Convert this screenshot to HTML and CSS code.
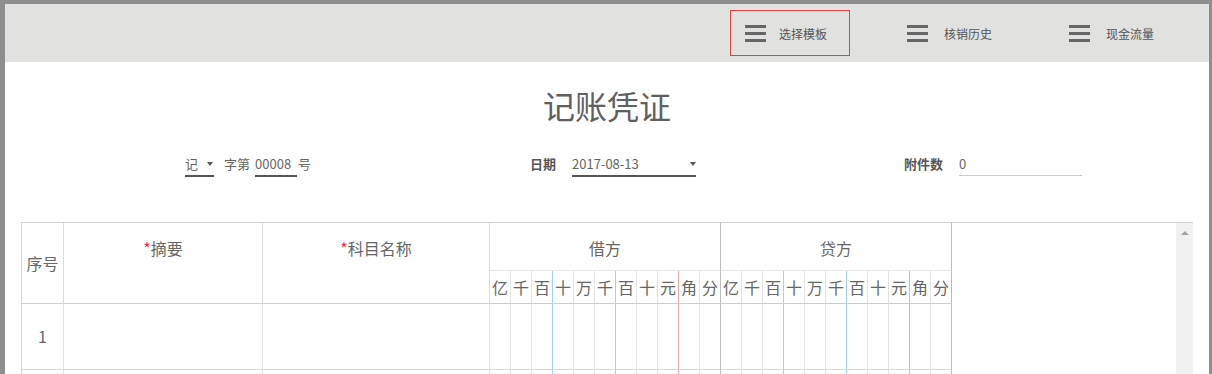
FILE: index.html
```html
<!DOCTYPE html>
<html lang="zh-CN">
<head>
    <meta charset="UTF-8">
    <meta name="viewport" content="width=device-width, initial-scale=1.0">
    <title>记账凭证</title>
    <link rel="stylesheet" href="styles.css">
</head>
<body>
    <div class="window">
        <div class="toolbar">
            <a class="tool active" href="#"><span class="icon-menu"><i></i><i></i><i></i></span>选择模板</a>
            <a class="tool" href="#"><span class="icon-menu"><i></i><i></i><i></i></span><span class="tool-text">核销历史</span></a>
            <a class="tool" href="#"><span class="icon-menu"><i></i><i></i><i></i></span><span class="tool-text">现金流量</span></a>
        </div>

        <div class="voucher">
            <h1 class="title">记账凭证</h1>

            <div class="voucher-meta">
                <div class="meta-group">
                    <span class="select-word">记<span class="caret"></span></span>
                    <span class="meta-text">字第</span>
                    <span class="voucher-no">00008</span>
                    <span class="meta-text">号</span>
                </div>
                <div class="meta-group">
                    <span class="meta-label">日期</span>
                    <span class="date-field">2017-08-13<span class="caret"></span></span>
                </div>
                <div class="meta-group">
                    <span class="meta-label">附件数</span>
                    <span class="attach-field">0</span>
                </div>
            </div>

            <div class="grid-wrap">
                <div class="entry-grid">
                    <div class="head span2 mid">序号</div>
                    <div class="head span2"><em>*</em>摘要</div>
                    <div class="head span2"><em>*</em>科目名称</div>
                    <div class="head group">借方</div>
                    <div class="head group">贷方</div>

                    <div class="digit">亿</div><div class="digit">千</div><div class="digit b">百</div>
                    <div class="digit">十</div><div class="digit">万</div><div class="digit b">千</div>
                    <div class="digit">百</div><div class="digit">十</div><div class="digit r">元</div>
                    <div class="digit">角</div><div class="digit e">分</div>
                    <div class="digit">亿</div><div class="digit">千</div><div class="digit b">百</div>
                    <div class="digit">十</div><div class="digit">万</div><div class="digit b">千</div>
                    <div class="digit">百</div><div class="digit">十</div><div class="digit r">元</div>
                    <div class="digit">角</div><div class="digit e">分</div>

                    <div class="cell num">1</div><div class="cell"></div><div class="cell"></div>
                    <div class="cell"></div><div class="cell"></div><div class="cell b"></div>
                    <div class="cell"></div><div class="cell"></div><div class="cell b"></div>
                    <div class="cell"></div><div class="cell"></div><div class="cell r"></div>
                    <div class="cell"></div><div class="cell e"></div>
                    <div class="cell"></div><div class="cell"></div><div class="cell b"></div>
                    <div class="cell"></div><div class="cell"></div><div class="cell b"></div>
                    <div class="cell"></div><div class="cell"></div><div class="cell r"></div>
                    <div class="cell"></div><div class="cell e"></div>

                    <div class="cell num"></div><div class="cell"></div><div class="cell"></div>
                    <div class="cell"></div><div class="cell"></div><div class="cell b"></div>
                    <div class="cell"></div><div class="cell"></div><div class="cell b"></div>
                    <div class="cell"></div><div class="cell"></div><div class="cell r"></div>
                    <div class="cell"></div><div class="cell e"></div>
                    <div class="cell"></div><div class="cell"></div><div class="cell b"></div>
                    <div class="cell"></div><div class="cell"></div><div class="cell b"></div>
                    <div class="cell"></div><div class="cell"></div><div class="cell r"></div>
                    <div class="cell"></div><div class="cell e"></div>
                </div>
                <div class="scrollbar"><span class="arrow-up"></span></div>
            </div>
        </div>
    </div>
</body>
</html>
```

FILE: styles.css
```css
html {
    background: #8e8e8e;
}

body {
    margin: 0;
    padding: 0;
    font-family: "Noto Sans CJK SC", "Microsoft YaHei", sans-serif;
    color: #666;
}

.window {
    margin: 4px 3px 0 5px;
    background: #fff;
    min-height: 370px;
}

/* 顶部工具栏 */
.toolbar {
    height: 58px;
    background: #e1e1df;
    display: flex;
    justify-content: flex-end;
    align-items: center;
    gap: 42px;
    padding-right: 35px;
}

.tool {
    box-sizing: border-box;
    width: 120px;
    height: 46px;
    border: 1px solid transparent;
    display: flex;
    align-items: center;
    padding-left: 14px;
    font-size: 12px;
    color: #555;
    text-decoration: none;
}

.tool.active {
    border-color: #e8403f;
}

.tool-text {
    margin-left: 3px;
}

.icon-menu {
    width: 21px;
    display: flex;
    flex-direction: column;
    gap: 4px;
    margin-right: 13px;
}

.icon-menu i {
    display: block;
    height: 3px;
    background: #666;
}

/* 凭证主体 */
.voucher {
    padding: 0 16px;
}

.title {
    margin: 21px 0 0;
    font-size: 32px;
    font-weight: normal;
    line-height: 44px;
    text-align: center;
    color: #606060;
}

.voucher-meta {
    margin-top: 26px;
    padding-left: 164px;
    display: grid;
    grid-template-columns: 345px 374px auto;
    font-size: 13px;
}

.meta-group {
    display: flex;
    align-items: flex-start;
    line-height: 22px;
}

.caret {
    display: inline-block;
    width: 0;
    height: 0;
    border-left: 3.5px solid transparent;
    border-right: 3.5px solid transparent;
    border-top: 4px solid #555;
    vertical-align: middle;
}

.select-word {
    width: 29px;
    display: flex;
    align-items: center;
    justify-content: space-between;
    border-bottom: 2px solid #555;
    padding-right: 1px;
    box-sizing: border-box;
}

.meta-text {
    margin-left: 10px;
}

.voucher-no {
    width: 42px;
    margin-left: 5px;
    border-bottom: 2px solid #555;
}

.voucher-no + .meta-text {
    margin-left: 1px;
}

.meta-label {
    font-weight: bold;
    color: #555;
    margin-right: 16px;
}

.date-field {
    width: 124px;
    display: flex;
    align-items: center;
    justify-content: space-between;
    border-bottom: 2px solid #555;
}

.attach-field {
    width: 123px;
    height: 23px;
    box-sizing: border-box;
    border-bottom: 1px solid #ccc;
}

/* 分录表格 */
.grid-wrap {
    margin-top: 45px;
    border-top: 1px solid #d4d4d4;
    border-left: 1px solid #d4d4d4;
    display: flex;
    height: 200px;
}

.entry-grid {
    flex: 1;
    display: grid;
    grid-template-columns: 42px 199px 227px repeat(22, 21px);
    grid-template-rows: 48px 33px 66px 66px;
    align-content: start;
}

.head,
.digit,
.cell {
    box-sizing: border-box;
    border-right: 1px solid #dcdcdc;
    border-bottom: 1px solid #dcdcdc;
    text-align: center;
    font-size: 16px;
    color: #666;
}

.head {
    padding-top: 13px;
    line-height: 24px;
}

.head em {
    font-style: normal;
    color: #f0294e;
}

.span2 {
    grid-row: span 2;
    border-bottom-color: #d0d0d0;
}

.head.mid {
    padding-top: 0;
    display: flex;
    align-items: center;
    justify-content: center;
}

.head.group {
    grid-column: span 11;
    border-right-color: #bdbdbd;
    border-bottom-color: #e6e6e6;
}

.digit {
    line-height: 32px;
    border-right-color: #e3e3e3;
    border-bottom-color: #cdcdcd;
}

.cell {
    border-bottom-color: #d8d8d8;
}

.cell.num {
    line-height: 65px;
}

.entry-grid .cell:nth-child(n+4) {
    border-right-color: #e3e3e3;
}

.entry-grid .b,
.entry-grid .cell.b {
    border-right-color: #9fd3f6;
}

.entry-grid .r,
.entry-grid .cell.r {
    border-right-color: #f3a9aa;
}

.entry-grid .e,
.entry-grid .cell.e {
    border-right-color: #bdbdbd;
}

.scrollbar {
    width: 17px;
    background: #f0f0f0;
    display: flex;
    justify-content: center;
    padding-top: 8px;
    box-sizing: border-box;
}

.arrow-up {
    width: 0;
    height: 0;
    border-left: 4px solid transparent;
    border-right: 4px solid transparent;
    border-bottom: 4px solid #a3a3a3;
}
```
